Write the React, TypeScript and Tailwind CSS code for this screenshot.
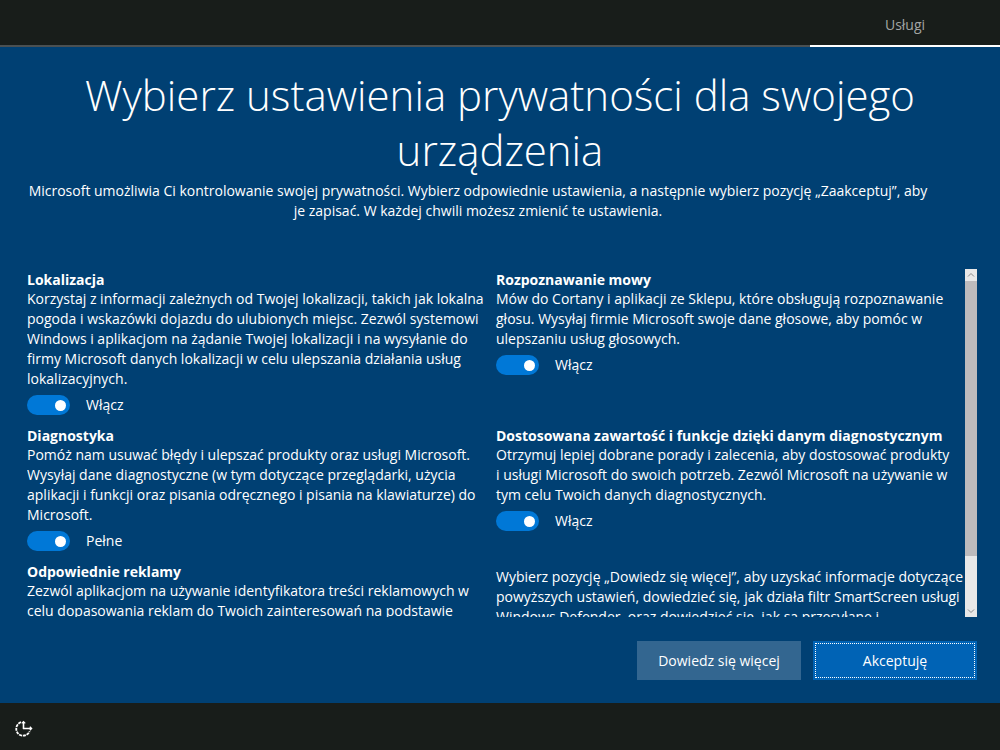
import { useState } from "react"

type SettingProps = {
    title: string
    lines: string[]
    on: string
    off: string
}

const Lines = ({ lines }: { lines: string[] }) => (
    <p className="text-sm leading-5">
        {lines.map((line, i) => (
            <span key={i}>
                {line}
                {i < lines.length - 1 && <br />}
            </span>
        ))}
    </p>
)

const Setting = ({ title, lines, on, off }: SettingProps) => {
    const [checked, setChecked] = useState(true)

    return (
        <section className="pb-3">
            <h2 className="text-sm leading-[18px] font-bold">{title}</h2>
            <Lines lines={lines} />
            <label className="mt-[6px] flex w-fit items-center gap-4 text-sm leading-5">
                <input
                    type="checkbox"
                    role="switch"
                    aria-label={title}
                    checked={checked}
                    onChange={(e) => setChecked(e.target.checked)}
                    className="peer sr-only"
                />
                <span className="flex h-5 w-[43px] items-center rounded-full bg-[#5b7f9c] px-1 peer-checked:justify-end peer-checked:bg-[#0078d7]">
                    <span className="h-[11px] w-[11px] rounded-full bg-white" />
                </span>
                <span>{checked ? on : off}</span>
            </label>
        </section>
    )
}

const Scrollbar = () => (
    <div className="flex w-3 shrink-0 flex-col bg-[#e8e8e8]" aria-hidden="true">
        <svg viewBox="0 0 12 12" className="h-3 w-3 fill-none stroke-[#8a8a8a]">
            <path d="M3 7.5 6 4.5 9 7.5" />
        </svg>
        <div className="flex min-h-0 flex-1 flex-col">
            <div className="h-[85%] bg-[#bdbbbd]" />
        </div>
        <svg viewBox="0 0 12 12" className="h-3 w-3 fill-none stroke-[#8a8a8a]">
            <path d="M3 4.5 6 7.5 9 4.5" />
        </svg>
    </div>
)

const EaseOfAccessIcon = () => (
    <svg viewBox="0 0 20 20" className="h-5 w-5 fill-none stroke-white">
        {/* dashed dial with two arrows */}
        <path d="M7 3.2A6.9 6.9 0 1 0 15.6 12.2" strokeWidth="1.8" strokeDasharray="3 0.8" />
        <path d="M9.5 10V3M9 9.5h8" strokeWidth="1.6" />
        <path d="M7.8 4.4 9.5 2.6l1.7 1.8M15.8 7.8 17.6 9.5l-1.8 1.7" strokeWidth="1.3" />
    </svg>
)

const App = () => {
    return (
        <div className="flex h-screen flex-col bg-[#004073] font-['Open_Sans','Noto_Sans',sans-serif] text-white">
            <header className="flex h-[47px] shrink-0 justify-end bg-[#181d1a]">
                <div className="flex-1 border-b-2 border-[#4a5052]" />
                <div className="flex w-[19%] items-center justify-center border-b-2 border-white pt-1 text-sm text-[#a3a5a4]">
                    Usługi
                </div>
            </header>

            <main className="flex min-h-0 flex-1 flex-col pt-5 pb-[23px]">
                <h1 className="text-center text-[42px] leading-[55px] font-light">
                    Wybierz ustawienia prywatności dla swojego
                    <br />
                    urządzenia
                </h1>
                <p className="mt-1 pr-16 pl-5 text-center text-sm leading-5">
                    Microsoft umożliwia Ci kontrolowanie swojej prywatności. Wybierz odpowiednie ustawienia, a następnie wybierz pozycję „Zaakceptuj”, aby
                    <br />
                    je zapisać. W każdej chwili możesz zmienić te ustawienia.
                </p>

                {/* Privacy settings */}
                <div className="mt-12 flex min-h-0 flex-1 pr-[23px] pl-[27px]">
                    <div className="grid flex-1 auto-rows-max grid-cols-2 overflow-y-auto pt-[2px] [scrollbar-width:none]">
                        <Setting
                            title="Lokalizacja"
                            on="Włącz"
                            off="Wyłącz"
                            lines={[
                                "Korzystaj z informacji zależnych od Twojej lokalizacji, takich jak lokalna",
                                "pogoda i wskazówki dojazdu do ulubionych miejsc. Zezwól systemowi",
                                "Windows i aplikacjom na żądanie Twojej lokalizacji i na wysyłanie do",
                                "firmy Microsoft danych lokalizacji w celu ulepszania działania usług",
                                "lokalizacyjnych.",
                            ]}
                        />
                        <Setting
                            title="Rozpoznawanie mowy"
                            on="Włącz"
                            off="Wyłącz"
                            lines={[
                                "Mów do Cortany i aplikacji ze Sklepu, które obsługują rozpoznawanie",
                                "głosu. Wysyłaj firmie Microsoft swoje dane głosowe, aby pomóc w",
                                "ulepszaniu usług głosowych.",
                            ]}
                        />
                        <Setting
                            title="Diagnostyka"
                            on="Pełne"
                            off="Podstawowe"
                            lines={[
                                "Pomóż nam usuwać błędy i ulepszać produkty oraz usługi Microsoft.",
                                "Wysyłaj dane diagnostyczne (w tym dotyczące przeglądarki, użycia",
                                "aplikacji i funkcji oraz pisania odręcznego i pisania na klawiaturze) do",
                                "Microsoft.",
                            ]}
                        />
                        <Setting
                            title="Dostosowana zawartość i funkcje dzięki danym diagnostycznym"
                            on="Włącz"
                            off="Wyłącz"
                            lines={[
                                "Otrzymuj lepiej dobrane porady i zalecenia, aby dostosować produkty",
                                "i usługi Microsoft do swoich potrzeb. Zezwól Microsoft na używanie w",
                                "tym celu Twoich danych diagnostycznych.",
                            ]}
                        />
                        <Setting
                            title="Odpowiednie reklamy"
                            on="Włącz"
                            off="Wyłącz"
                            lines={[
                                "Zezwól aplikacjom na używanie identyfikatora treści reklamowych w",
                                "celu dopasowania reklam do Twoich zainteresowań na podstawie",
                            ]}
                        />
                        <div className="pt-1">
                            <Lines
                                lines={[
                                    "Wybierz pozycję „Dowiedz się więcej”, aby uzyskać informacje dotyczące",
                                    "powyższych ustawień, dowiedzieć się, jak działa filtr SmartScreen usługi",
                                    "Windows Defender, oraz dowiedzieć się, jak są przesyłane i",
                                ]}
                            />
                        </div>
                    </div>
                    <Scrollbar />
                </div>

                <div className="mt-6 flex justify-end gap-3 pr-[23px] text-sm">
                    <button type="button" className="h-[39px] w-[164px] bg-[#336690]">
                        Dowiedz się więcej
                    </button>
                    <button
                        type="button"
                        className="h-[39px] w-[164px] bg-[#0063b5] outline-1 -outline-offset-3 outline-white outline-dotted"
                    >
                        Akceptuję
                    </button>
                </div>
            </main>

            <footer className="flex h-[47px] shrink-0 items-center bg-[#181d1a] pt-1 pl-[14px]">
                <button type="button" aria-label="Ułatwienia dostępu">
                    <EaseOfAccessIcon />
                </button>
            </footer>
        </div>
    )
}

export default App
